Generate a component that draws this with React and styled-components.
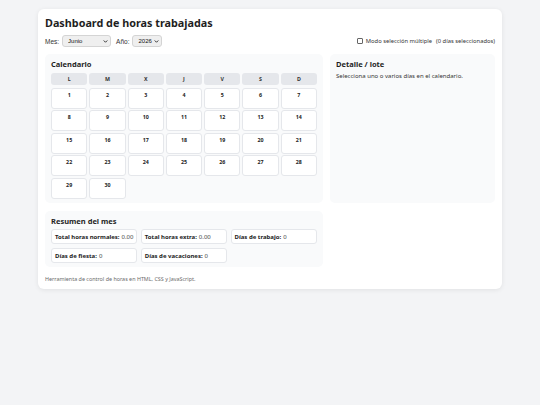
import styled, { createGlobalStyle } from "styled-components"

const GlobalStyle = createGlobalStyle`
  body {
    margin: 0;
    background: #f3f4f6;
    font-family: "Noto Sans", "Open Sans", sans-serif;
    color: #222;
  }
`

const dayNames = ["L", "M", "X", "J", "V", "S", "D"]
const days = Array.from({ length: 30 }, (_, i) => i + 1)
const months = ["Enero", "Febrero", "Marzo", "Abril", "Mayo", "Junio", "Julio", "Agosto", "Septiembre", "Octubre", "Noviembre", "Diciembre"]

const summary = [
  { label: "Total horas normales:", value: "0.00" },
  { label: "Total horas extra:", value: "0.00" },
  { label: "Días de trabajo:", value: "0" },
  { label: "Días de fiesta:", value: "0" },
  { label: "Días de vacaciones:", value: "0" },
]

export default function App() {
  return (
    <>
      <GlobalStyle />
      <Page>
        <Card>
          <Title>Dashboard de horas trabajadas</Title>
          <Controls>
            <Field>
              <Label>Mes:</Label>
              <SelectWrap width={49}>
                <Select defaultValue="5">
                  {months.map((m, i) => (
                    <option key={m} value={i}>{m}</option>
                  ))}
                </Select>
                <Chevron />
              </SelectWrap>
              <Label>Año:</Label>
              <SelectWrap width={30}>
                <Select defaultValue="2026">
                  <option value="2025">2025</option>
                  <option value="2026">2026</option>
                  <option value="2027">2027</option>
                </Select>
                <Chevron />
              </SelectWrap>
            </Field>
            <MultiToggle>
              <Check type="checkbox" />
              <span>Modo selección múltiple</span>
              <Counter>(0 días seleccionados)</Counter>
            </MultiToggle>
          </Controls>

          <Layout>
            <Panel>
              <PanelTitle>Calendario</PanelTitle>
              <WeekHeader>
                {dayNames.map((d) => (
                  <WeekDay key={d}>{d}</WeekDay>
                ))}
              </WeekHeader>
              <DaysGrid>
                {days.map((d) => (
                  <DayCell key={d}>{d}</DayCell>
                ))}
              </DaysGrid>
            </Panel>

            <Panel>
              <PanelTitle>Detalle / lote</PanelTitle>
              <Hint>Selecciona uno o varios días en el calendario.</Hint>
            </Panel>

            <Panel>
              <PanelTitle>Resumen del mes</PanelTitle>
              <StatsGrid>
                {summary.map((s) => (
                  <Stat key={s.label}>
                    <b>{s.label}</b> {s.value}
                  </Stat>
                ))}
              </StatsGrid>
            </Panel>
          </Layout>

          <Footer>Herramienta de control de horas en HTML, CSS y JavaScript.</Footer>
        </Card>
      </Page>
    </>
  )
}

const Chevron = () => (
  <ChevronIcon viewBox="0 0 10 10">
    <path d="M2 3.5 L5 6.5 L8 3.5" fill="none" stroke="#222" strokeWidth="1.8" strokeLinecap="round" strokeLinejoin="round" />
  </ChevronIcon>
)

const Page = styled.div`
  padding: 9px 38px;
`

const Card = styled.div`
  background: #fff;
  border-radius: 6px;
  box-shadow: 0 1px 5px rgba(0, 0, 0, 0.08);
  padding: 7px 7px 6px;
`

const Title = styled.h1`
  margin: 0;
  font-size: 10.8px;
  line-height: 13px;
  font-weight: 700;
  color: #1f1f1f;
`

const Controls = styled.div`
  display: flex;
  justify-content: space-between;
  align-items: center;
  margin-top: 6px;
  height: 12px;
  font-size: 6px;
`

const Field = styled.div`
  display: flex;
  align-items: center;
  gap: 3px;
`

const Label = styled.span`
  font-family: "Liberation Sans", Arial, sans-serif;
  font-size: 6.5px;
  color: #333;
  &:not(:first-child) {
    margin-left: 2px;
  }
`

const SelectWrap = styled.div`
  position: relative;
  width: ${(p) => p.width}px;
  height: 12px;
`

const Select = styled.select`
  appearance: none;
  display: block;
  box-sizing: border-box;
  width: 100%;
  height: 12px;
  margin: 0;
  padding: 0 0 0 5px;
  border: 1px solid #d4d4d4;
  border-radius: 3px;
  background: #efefef;
  font-family: "Liberation Sans", Arial, sans-serif;
  font-size: 6px;
  line-height: 10px;
  color: #111;
`

const ChevronIcon = styled.svg`
  position: absolute;
  right: 3px;
  top: 3.5px;
  width: 5px;
  height: 5px;
  pointer-events: none;
`

const MultiToggle = styled.label`
  display: flex;
  align-items: center;
  gap: 2px;
  font-size: 5.8px;
  color: #333;
`

const Check = styled.input`
  appearance: none;
  box-sizing: border-box;
  width: 6px;
  height: 6px;
  margin: 0 1px 0 0;
  border: 0.8px solid #666;
  border-radius: 1px;
  background: #fff;
`

const Counter = styled.span`
  margin-left: 2px;
`

const Layout = styled.div`
  display: grid;
  grid-template-columns: 278px 1fr;
  column-gap: 7px;
  row-gap: 8px;
  margin-top: 7px;
`

const Panel = styled.section`
  background: #f9fafb;
  border-radius: 5px;
  padding: 5px 6px 4px;
`

const PanelTitle = styled.h2`
  margin: 0 0 2.5px;
  font-size: 7.5px;
  line-height: 11px;
  font-weight: 700;
  color: #1f1f1f;
`

const WeekHeader = styled.div`
  display: grid;
  grid-template-columns: repeat(7, 1fr);
  gap: 2px;
`

const WeekDay = styled.div`
  height: 12px;
  line-height: 12px;
  background: #e5e7eb;
  border-radius: 3px;
  text-align: center;
  font-size: 5.3px;
  font-weight: 700;
  color: #333;
`

const DaysGrid = styled.div`
  display: grid;
  grid-template-columns: repeat(7, 1fr);
  column-gap: 2px;
  row-gap: 1.5px;
  margin-top: 3px;
`

const DayCell = styled.div`
  box-sizing: border-box;
  height: 21px;
  padding-top: 3px;
  background: #fff;
  border: 1px solid #e5e7eb;
  border-radius: 3px;
  text-align: center;
  font-size: 5.3px;
  line-height: 7px;
  font-weight: 700;
  color: #222;
`

const Hint = styled.p`
  margin: 0;
  font-size: 6px;
  line-height: 7px;
  color: #333;
`

const StatsGrid = styled.div`
  display: grid;
  grid-template-columns: repeat(3, 1fr);
  column-gap: 3.3px;
  row-gap: 4px;
`

const Stat = styled.div`
  box-sizing: border-box;
  height: 15px;
  padding: 0 3px;
  display: flex;
  align-items: center;
  gap: 2px;
  background: #fff;
  border: 1px solid #e5e7eb;
  border-radius: 3px;
  font-size: 6px;
  color: #444;
  white-space: nowrap;
  b {
    color: #222;
  }
`

const Footer = styled.p`
  margin: 8.5px 0 0;
  font-size: 5.4px;
  line-height: 7px;
  color: #6b6b6b;
`
